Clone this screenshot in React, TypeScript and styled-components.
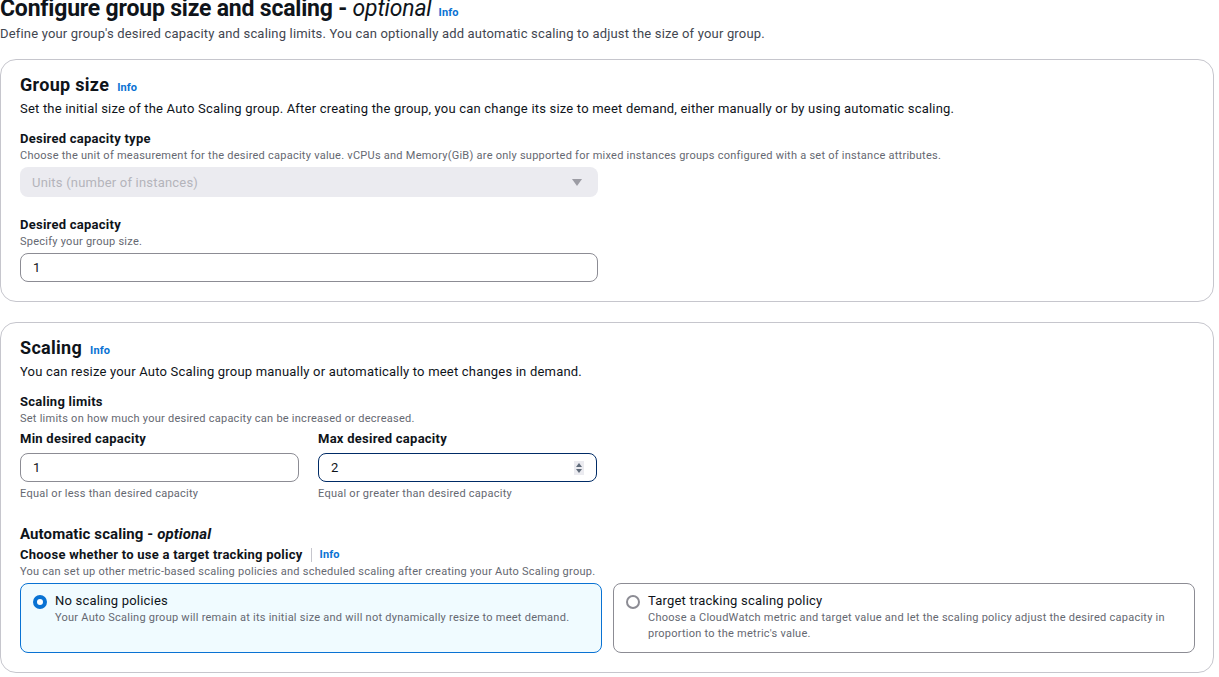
import React from "react";
import styled, { createGlobalStyle } from "styled-components";

const Global = createGlobalStyle`
  html, body { margin: 0; padding: 0; background: #fff; }
  body { font-family: Roboto, "Open Sans", sans-serif; color: #0f141a; }
  * { box-sizing: border-box; }
`;

const Page = styled.div`
  width: 1219px;
  padding: 0 5px 0 0;
  display: flex;
  flex-direction: column;
`;

const PageHeader = styled.div`
  margin-top: -3px;
  display: flex;
  flex-direction: column;
`;

const Title = styled.h1`
  margin: 0;
  font-size: 23px;
  line-height: 24px;
  font-weight: 700;
  letter-spacing: -0.2px;
  display: flex;
  align-items: baseline;
  gap: 7px;
  em { font-weight: 400; font-style: italic; }
`;

const Info = styled.a`
  font-size: 11px;
  font-weight: 700;
  color: #0972d3;
  text-decoration: none;
  letter-spacing: 0.1px;
`;

const Lead = styled.p`
  margin: 0;
  font-size: 13px;
  line-height: 18px;
  letter-spacing: 0.18px;
  color: #424650;
`;

const Card = styled.section<{ $mt: number }>`
  margin-top: ${(p) => p.$mt}px;
  border: 1px solid #c6c6cd;
  border-radius: 16px;
  padding: 13px 19px 19px;
  display: flex;
  flex-direction: column;
`;

const H2 = styled.h2`
  margin: 0;
  font-size: 18px;
  line-height: 24px;
  font-weight: 700;
  letter-spacing: 0.3px;
  display: flex;
  align-items: baseline;
  gap: 8px;
`;

const Desc = styled.p`
  margin: 0;
  font-size: 13px;
  line-height: 18px;
  letter-spacing: 0.2px;
  color: #0f141a;
`;

const Field = styled.div<{ $mt?: number }>`
  margin-top: ${(p) => p.$mt ?? 0}px;
  display: flex;
  flex-direction: column;
`;

const Label = styled.div`
  font-size: 13px;
  line-height: 18px;
  font-weight: 700;
  letter-spacing: 0.25px;
  display: flex;
  align-items: center;
`;

const Hint = styled.div`
  font-size: 11px;
  line-height: 16px;
  letter-spacing: 0.25px;
  color: #656871;
`;

const Select = styled.div`
  margin-top: 3px;
  width: 578px;
  height: 30px;
  border-radius: 8px;
  background: #ebebf0;
  color: #b4b4bb;
  font-size: 13px;
  letter-spacing: 0.2px;
  padding: 0 16px 0 12px;
  display: flex;
  align-items: center;
  justify-content: space-between;
`;

const Caret = styled.span`
  width: 0;
  height: 0;
  border-left: 5px solid transparent;
  border-right: 5px solid transparent;
  border-top: 7px solid #9c9ca4;
`;

const Input = styled.div<{ $focus?: boolean; $w?: number; $mt?: number }>`
  margin-top: ${(p) => p.$mt ?? 3}px;
  width: ${(p) => p.$w ?? 578}px;
  height: 29px;
  border-radius: 8px;
  border: 1px solid ${(p) => (p.$focus ? "#002b66" : "#8c8c94")};
  font-size: 13px;
  padding: 0 12px 0 12px;
  display: flex;
  align-items: center;
  justify-content: space-between;
`;

const Spinner = styled.span`
  width: 10px;
  height: 14px;
  background: #ebebf0;
  display: flex;
  flex-direction: column;
  align-items: center;
  justify-content: center;
  gap: 2px;
  &::before, &::after {
    content: "";
    width: 0; height: 0;
    border-left: 3px solid transparent;
    border-right: 3px solid transparent;
  }
  &::before { border-bottom: 4px solid #5f6b7a; }
  &::after { border-top: 4px solid #5f6b7a; }
`;

const Row = styled.div`
  margin-top: 3px;
  display: grid;
  grid-template-columns: 279px 279px;
  column-gap: 19px;
`;

const Col = styled.div`
  display: flex;
  flex-direction: column;
`;

const FieldHint = styled(Hint)`
  margin-top: 4px;
`;

const H3 = styled.h3`
  margin: 22px 0 0;
  font-size: 15px;
  line-height: 20px;
  font-weight: 700;
  letter-spacing: 0.1px;
  em { font-weight: 700; font-style: italic; }
`;

const Divider = styled.span`
  width: 1px;
  height: 14px;
  background: #c6c6cd;
  margin: 0 8px;
`;

const Tiles = styled.div`
  margin-top: 3px;
  display: grid;
  grid-template-columns: 582px 582px;
  column-gap: 11px;
`;

const Tile = styled.div<{ $sel?: boolean }>`
  height: 70px;
  border-radius: 8px;
  border: 1px solid ${(p) => (p.$sel ? "#0972d3" : "#8c8c94")};
  background: ${(p) => (p.$sel ? "#f0fbff" : "#fff")};
  padding: 8px 12px;
  display: grid;
  grid-template-columns: 14px 1fr;
  column-gap: 8px;
`;

const Radio = styled.span<{ $on?: boolean }>`
  margin-top: 3px;
  width: 14px;
  height: 14px;
  border-radius: 50%;
  border: ${(p) => (p.$on ? "4px solid #0972d3" : "2px solid #8c8c94")};
  background: #fff;
`;

const TileTitle = styled.div`
  font-size: 13px;
  line-height: 18px;
  letter-spacing: 0.2px;
`;

const TileDesc = styled.div`
  font-size: 11px;
  line-height: 16px;
  letter-spacing: 0.25px;
  color: #656871;
  padding-right: 16px;
`;

export default function App() {
  return (
    <Page>
      <Global />
      <PageHeader>
        <Title>
          <span>
            Configure group size and scaling - <em>optional</em>
          </span>
          <Info>Info</Info>
        </Title>
        <Lead>
          Define your group's desired capacity and scaling limits. You can optionally add automatic scaling to adjust the size of your group.
        </Lead>
      </PageHeader>

      <Card $mt={16}>
        <H2>
          Group size <Info>Info</Info>
        </H2>
        <Desc>
          Set the initial size of the Auto Scaling group. After creating the group, you can change its size to meet demand, either manually or by using automatic scaling.
        </Desc>
        <Field $mt={12}>
          <Label>Desired capacity type</Label>
          <Hint>
            Choose the unit of measurement for the desired capacity value. vCPUs and Memory(GiB) are only supported for mixed instances groups configured with a set of instance attributes.
          </Hint>
          <Select>
            Units (number of instances)
            <Caret />
          </Select>
        </Field>
        <Field $mt={19}>
          <Label>Desired capacity</Label>
          <Hint>Specify your group size.</Hint>
          <Input>1</Input>
        </Field>
      </Card>

      <Card $mt={20}>
        <H2>
          Scaling <Info>Info</Info>
        </H2>
        <Desc>You can resize your Auto Scaling group manually or automatically to meet changes in demand.</Desc>
        <Field $mt={12}>
          <Label>Scaling limits</Label>
          <Hint>Set limits on how much your desired capacity can be increased or decreased.</Hint>
          <Row>
            <Col>
              <Label>Min desired capacity</Label>
              <Input $w={279} $mt={5}>1</Input>
              <FieldHint>Equal or less than desired capacity</FieldHint>
            </Col>
            <Col>
              <Label>Max desired capacity</Label>
              <Input $focus $w={279} $mt={5}>
                2
                <Spinner />
              </Input>
              <FieldHint>Equal or greater than desired capacity</FieldHint>
            </Col>
          </Row>
        </Field>
        <H3>
          Automatic scaling - <em>optional</em>
        </H3>
        <Field $mt={2}>
          <Label>
            Choose whether to use a target tracking policy
            <Divider />
            <Info>Info</Info>
          </Label>
          <Hint>You can set up other metric-based scaling policies and scheduled scaling after creating your Auto Scaling group.</Hint>
          <Tiles>
            <Tile $sel>
              <Radio $on />
              <div>
                <TileTitle>No scaling policies</TileTitle>
                <TileDesc>Your Auto Scaling group will remain at its initial size and will not dynamically resize to meet demand.</TileDesc>
              </div>
            </Tile>
            <Tile>
              <Radio />
              <div>
                <TileTitle>Target tracking scaling policy</TileTitle>
                <TileDesc>
                  Choose a CloudWatch metric and target value and let the scaling policy adjust the desired capacity in proportion to the metric's value.
                </TileDesc>
              </div>
            </Tile>
          </Tiles>
        </Field>
      </Card>
    </Page>
  );
}
